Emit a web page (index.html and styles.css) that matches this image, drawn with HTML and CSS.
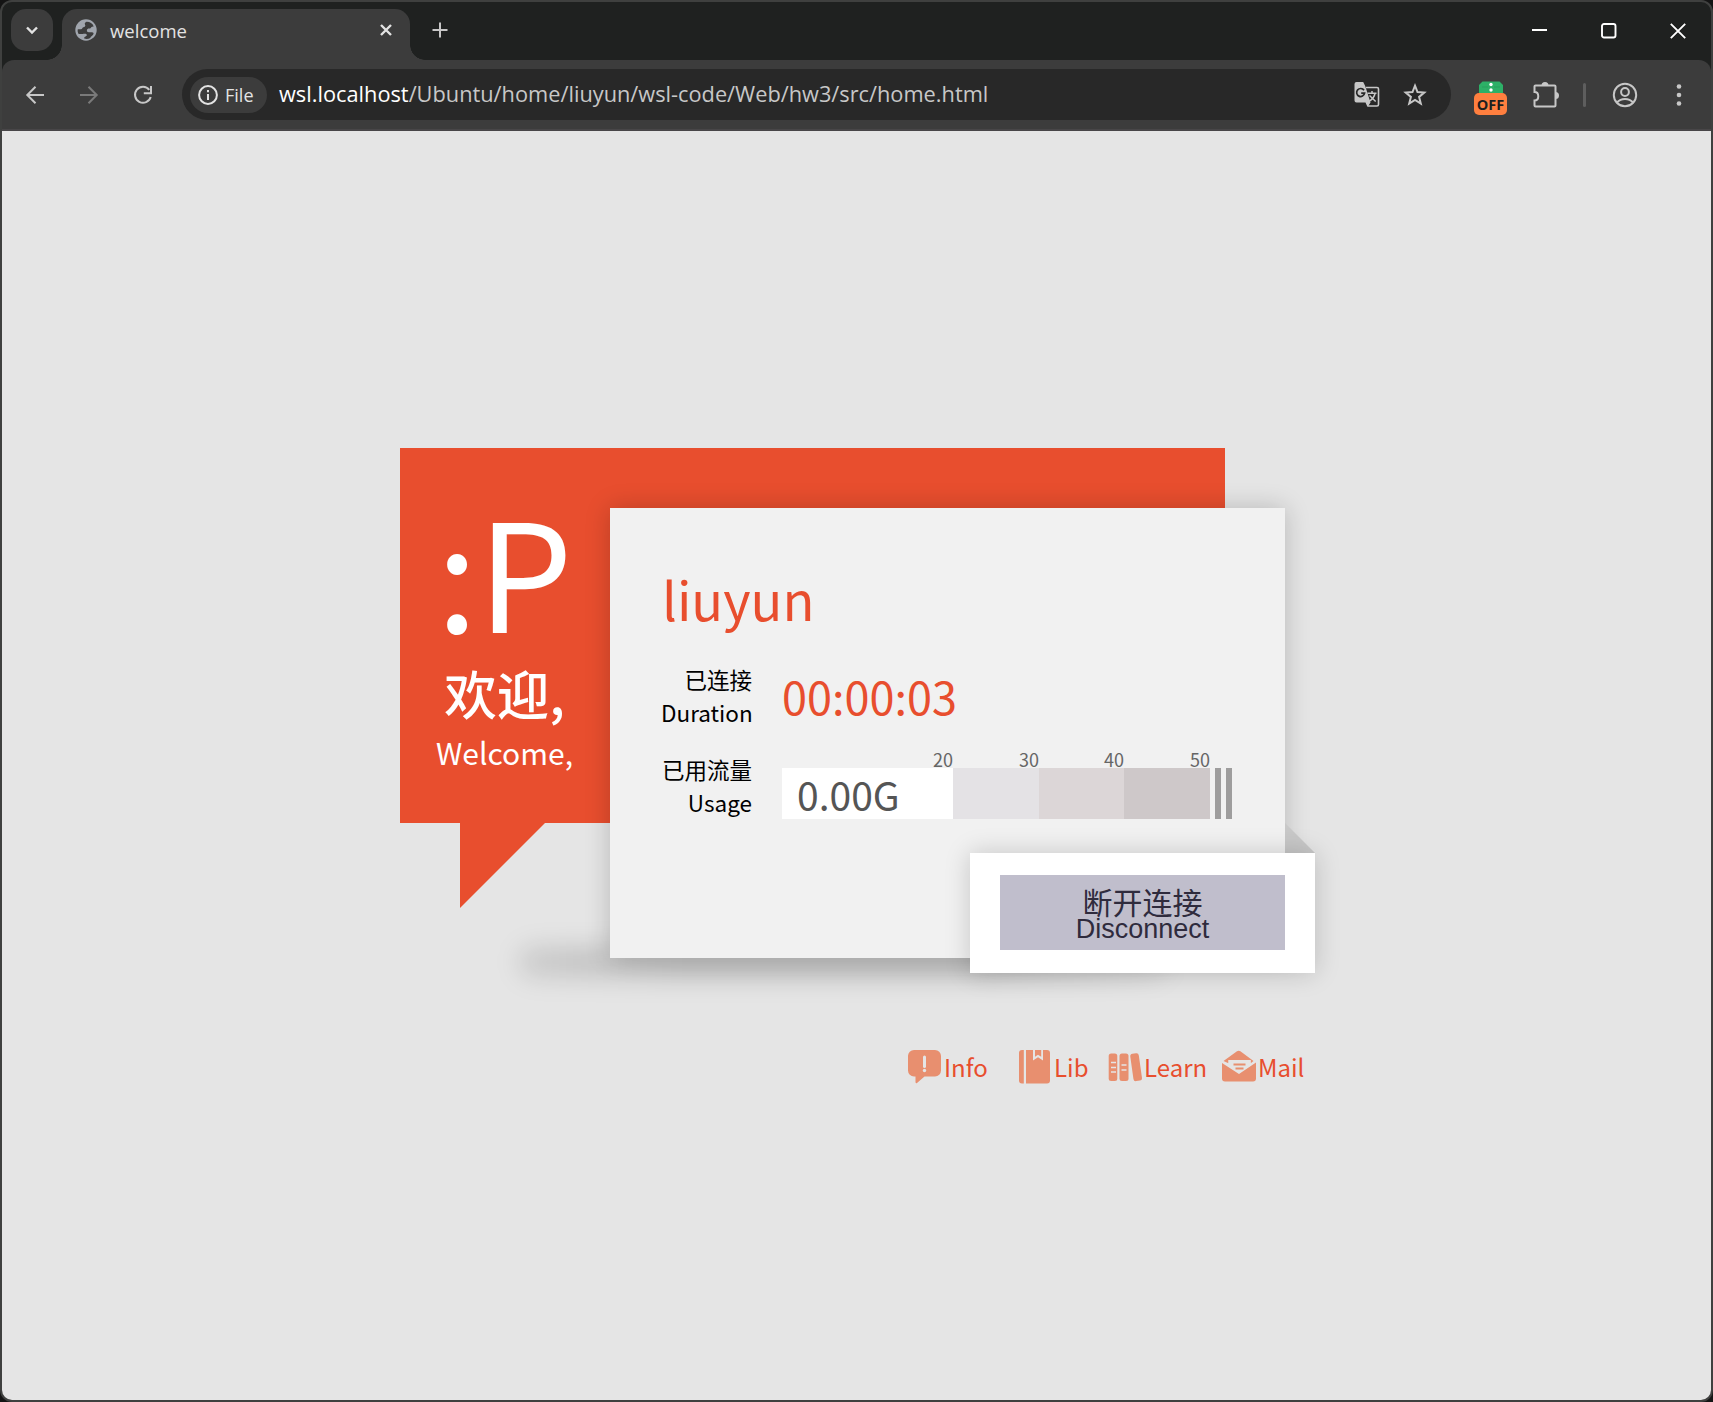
FILE: index.html
```html
<!DOCTYPE html>
<html lang="zh-CN">
<head>
<meta charset="utf-8">
<title>welcome</title>
<link rel="stylesheet" href="styles.css">
</head>
<body>
<div class="window">
  <header class="tabstrip">
    <div class="tab-search"><svg width="14" height="14" viewBox="0 0 14 14"><path d="M2 4.500l5 5 5-5" class="stroke bold"/></svg></div>
    <div class="tab">
      <svg class="globe" width="22" height="22" viewBox="0 0 22 22"><circle cx="11" cy="11" r="10.700" fill="#a0a5ad"/><path d="M11.500 2.800C9.500 3.600 9.500 4.800 10.200 6c.5 1.300-.6 2-1.900 2.300-1.300.4-.9 2-2.300 2H2.800c-.4 1.800 0 3.300.8 4.600h3.800c1.700 0 2.800-.6 3.900.2 1 .8.500 2.200-.7 2.500-1 .3-1.600 1-1.400 2 2.300.6 4.300.3 6-.6.6-1.700 2.700-2.200 3.300-3.900.3-1.100-.4-1.800-1.500-1.800h-3.200c-1.400 0-2-.9-1.900-2 .1-1.200 1-1.700 2.200-1.700 1.500.1 1.700-1.300 2.900-1.900l1.700-.3C17.500 4.300 14.800 2.700 11.500 2.800z" fill="#3c3c3c"/></svg>
      <span class="tab-title">welcome</span>
      <svg class="tab-close" width="14" height="14" viewBox="0 0 14 14"><path d="M2 2l10 10M12 2L2 12" class="stroke bold"/></svg>
    </div>
    <svg class="new-tab" width="16" height="16" viewBox="0 0 16 16"><path d="M8 .5v15M.5 8h15" class="stroke soft"/></svg>
    <div class="controls">
      <svg width="16" height="16" viewBox="0 0 16 16"><path d="M0 7h15" stroke="#fff" stroke-width="2"/></svg>
      <svg width="16" height="16" viewBox="0 0 16 16"><rect x="1" y="1" width="13.500" height="13.500" rx="2" fill="none" stroke="#fff" stroke-width="1.900"/></svg>
      <svg width="16" height="16" viewBox="0 0 16 16"><path d="M.8.8l14.400 14.400M15.200.8L.8 15.200" stroke="#fff" stroke-width="1.900"/></svg>
    </div>
  </header>

  <nav class="toolbar">
    <svg class="nav-icon" width="20" height="20" viewBox="0 0 20 20"><path d="M19 10H2.500M10.500 1.800L2.300 10l8.200 8.200" class="stroke"/></svg>
    <svg class="nav-icon dim" width="20" height="20" viewBox="0 0 20 20"><path d="M1 10h16.500M9.500 1.800l8.200 8.200-8.200 8.200" class="stroke"/></svg>
    <svg class="nav-icon" width="20" height="20" viewBox="0 0 20 20"><path d="M16.300 4.800A8 8 0 1 0 17.700 12" class="stroke"/><path d="M18 1v7.200h-7.200" class="stroke"/></svg>
    <div class="omnibox">
      <div class="chip">
        <svg width="20" height="20" viewBox="0 0 20 20"><circle cx="10" cy="10" r="8.900" class="stroke light"/><path d="M10 9v6M10 5v2.200" class="stroke light"/></svg>
        <span>File</span>
      </div>
      <div class="url"><b>wsl.localhost</b>/Ubuntu/home/liuyun/wsl-code/Web/hw3/src/home.html</div>
      <svg class="translate" width="26" height="26" viewBox="0 0 26 26"><path d="M12 5.500h11a1.500 1.500 0 0 1 1.500 1.500v15.500a1.500 1.500 0 0 1-1.500 1.500h-9" fill="none" stroke="#c7c7c7" stroke-width="1.600"/><path d="M2.500 0h6.700l2 4 5.300 16.500-3 4.500-2-4.500h-9A2 2 0 0 1 .5 18.500V2a2 2 0 0 1 2-2z" fill="#c7c7c7"/><path d="M13.500 11.200h9M18 9v2.200M21 11.500c-.7 3.500-3 6-5.700 7.700M15.500 13.500l6.200 6" fill="none" stroke="#c7c7c7" stroke-width="1.500"/><path d="M10 8.300A4 4 0 1 0 10.600 11.200H7.200" fill="none" stroke="#282828" stroke-width="1.700"/></svg>
      <svg class="star" width="24" height="24" viewBox="0 0 24 24"><path d="M12 2.700l2.500 6.300 6.800.5-5.200 4.400 1.700 6.700L12 17l-5.800 3.600 1.700-6.700L2.700 9.500 9.500 9z" class="stroke"/></svg>
    </div>
    <div class="extension">
      <svg width="26" height="12" viewBox="0 0 26 12"><path d="M4.500.5h17L25 4v8H1V4z" fill="#2db067"/><circle cx="13" cy="3.500" r="1.700" fill="#fff"/><circle cx="13" cy="9" r="1.700" fill="#fff"/><path d="M4 6h6M16 6h6" stroke="#27a15c"/></svg>
      <span>OFF</span>
    </div>
    <svg class="puzzle" width="26" height="26" viewBox="0 0 26 26"><path d="M2.500 3.500h19a1 1 0 0 1 1 1v19a1 1 0 0 1-1 1h-19a1 1 0 0 1-1-1v-5c5 0 5-8.500 0-8.500V4.500a1 1 0 0 1 1-1z" class="stroke"/><path d="M8.500 3.500a3.500 3.500 0 0 1 7 0zM22.500 10a3.500 3.500 0 0 1 0 7z" fill="#c7c7c7"/></svg>
    <i class="divider"></i>
    <svg class="profile" width="26" height="26" viewBox="0 0 26 26"><circle cx="13" cy="13" r="11.200" class="stroke"/><circle cx="13" cy="10" r="3.900" class="stroke"/><path d="M5 20.500c4-4.700 12-4.700 16 0" class="stroke"/></svg>
    <svg class="menu" width="6" height="22" viewBox="0 0 6 22"><g fill="#c7c7c7"><circle cx="3" cy="2.500" r="2.300"/><circle cx="3" cy="11" r="2.300"/><circle cx="3" cy="19.500" r="2.300"/></g></svg>
  </nav>

  <main class="page">
    <section class="stage">
      <div class="bubble">
        <div class="greeting">
          <div class="face">:P</div>
          <div class="hello">欢迎,</div>
          <div class="hello-en">Welcome,</div>
        </div>
      </div>
      <div class="floor-shadow"></div>
      <div class="card">
        <h1 class="user">liuyun</h1>
        <div class="row">
          <div class="label">已连接<br>Duration</div>
          <div class="time">00:00:03</div>
        </div>
        <div class="row">
          <div class="label">已用流量<br>Usage</div>
          <div class="meter">
            <div class="seg s20"><em>20</em><span>0.00G</span></div>
            <div class="seg s30"><em>30</em></div>
            <div class="seg s40"><em>40</em></div>
            <div class="seg s50"><em>50</em></div>
            <i class="tick"></i><i class="tick"></i>
          </div>
        </div>
      </div>
      <div class="fold"></div>
      <div class="action">
        <button class="disconnect"><span>断开连接</span>Disconnect</button>
      </div>
    </section>

    <footer class="links">
      <a><svg width="36" height="36" viewBox="0 0 36 36"><path d="M7 1h21a6 6 0 0 1 6 6v14.500a6 6 0 0 1-6 6H17.500L10 34c-1 .5-1.500 0-1.500-1v-5.500H7a6 6 0 0 1-6-6V7a6 6 0 0 1 6-6z"/><path d="M17.500 8v9.500" class="cut" stroke-width="3" stroke-linecap="round"/><circle cx="17.500" cy="21.500" r="1.700" fill="#e5e5e5"/></svg>Info</a>
      <a><svg width="36" height="36" viewBox="0 0 36 36"><path d="M5 1h1.800v33.500H5a3 3 0 0 1-3-3V4a3 3 0 0 1 3-3zM9 1h7v10.500l5-3.200 5 3.200V1h4a3 3 0 0 1 3 3v27.500a3 3 0 0 1-3 3H9z"/><path d="M18 1h6.200v6.800L21 5.800l-3 2z"/></svg>Lib</a>
      <a><svg class="shelf" width="36" height="36" viewBox="0 0 36 36"><rect x="1.700" y="4.500" width="8.600" height="27.500" rx="2.500"/><rect x="12.500" y="4.500" width="9" height="27.500" rx="2.500"/><rect x="24.800" y="4.500" width="8.600" height="27.500" rx="2.500" transform="rotate(-8 29 18)"/><path d="M4 13.500h5M4 18.500h5M4 23h5M14.500 16h5M14.500 21h5" class="cut" stroke-width="1.500"/></svg>Learn</a>
      <a><svg width="36" height="36" viewBox="0 0 36 36"><path d="M2.500 12L16 2.300c1.200-.9 2.200-.9 3.400 0l13.100 9.700-2.800 2.300V11H7.500v3.300z"/><path d="M1 14l17 11 17-11.500v16a3 3 0 0 1-3 3H4a3 3 0 0 1-3-3z"/><path d="M7.500 11h22v5.500L18 24 7.500 17z" fill="#e5e5e5"/><path d="M12.500 15.500h12M14.500 19.500h8" stroke="#e88f6f" stroke-width="2"/></svg>Mail</a>
    </footer>
  </main>
</div>
</body>
</html>
```
FILE: styles.css
```css
* { box-sizing: border-box; }
body {
  margin: 0;
  background: #141414;
  font-family: "Noto Sans CJK SC", "Noto Sans", sans-serif;
}
svg { display: block; flex: none; }
.window {
  width: 1713px;
  height: 1402px;
  border: 2px solid #3f403f;
  border-radius: 12px;
  overflow: hidden;
  background: #1f2120;
  display: flex;
  flex-direction: column;
}
.stroke { fill: none; stroke: #c7c7c7; stroke-width: 2; }
.stroke.bold { stroke: #e3e3e3; stroke-width: 2.400; }
.stroke.light { stroke: #e3e3e3; }
.dim { opacity: .45; }

/* tab strip */
.tabstrip {
  height: 58px;
  display: flex;
  align-items: flex-start;
  padding: 7px 25px 0 9px;
  font-family: "Open Sans", "Noto Sans", sans-serif;
}
.tab-search {
  width: 42px;
  height: 42px;
  border-radius: 15px;
  background: #3c3c3c;
  display: grid;
  place-items: center;
}
.tab {
  position: relative;
  width: 348px;
  height: 51px;
  margin-left: 9px;
  padding: 0 17px 9px 13px;
  border-radius: 15px 15px 0 0;
  background: #3c3c3c;
  display: flex;
  align-items: center;
}
.tab::before, .tab::after {
  content: "";
  position: absolute;
  bottom: 0;
  width: 15px;
  height: 15px;
}
.tab::before { left: -15px; background: radial-gradient(circle at 0 0, transparent 14.500px, #3c3c3c 15px); }
.tab::after { right: -15px; background: radial-gradient(circle at 100% 0, transparent 14.500px, #3c3c3c 15px); }
.tab-title {
  margin-left: 13px;
  flex: 1;
  padding-top: 2px;
  font-size: 18.500px;
  line-height: 24px;
  color: #e3e3e3;
}
.new-tab { margin: 13px 0 0 22px; }
.controls { margin: 14px 0 0 auto; display: flex; gap: 53px; }

/* toolbar */
.toolbar {
  height: 71px;
  border-bottom: 2px solid #484648;
  border-radius: 12px 12px 0 0;
  background: #3c3c3c;
  display: flex;
  align-items: center;
  padding: 0 29px 0 23px;
  font-family: "Open Sans", "Noto Sans", sans-serif;
}
.nav-icon { margin-right: 34px; }
.omnibox {
  width: 1269px;
  height: 51px;
  margin-left: -5px;
  padding: 0 24px 0 8px;
  border-radius: 26px;
  background: #282828;
  display: flex;
  align-items: center;
}
.chip {
  width: 77px;
  height: 36px;
  padding-left: 8px;
  border-radius: 18px;
  background: #3c3c3c;
  display: flex;
  align-items: center;
  gap: 7px;
  font-size: 18px;
  color: #e3e3e3;
}
.url { margin: 0 0 2px 12px; flex: 1; font-size: 21.780px; line-height: 30px; color: #c7c7c7; white-space: nowrap; }
.url b { font-weight: 400; color: #fff; }
.translate { margin-right: 23px; }
.extension { width: 33px; margin: 6px 0 0 23px; display: flex; flex-direction: column; align-items: center; }
.extension span {
  width: 33px;
  height: 22px;
  border-radius: 5px;
  background: #ff7f3f;
  color: #1f1f1f;
  font-size: 14.500px;
  font-weight: 700;
  line-height: 23px;
  text-align: center;
}
.puzzle { margin-left: 26px; }
.divider { width: 3px; height: 24px; margin-left: 24px; background: #5e5e5e; border-radius: 2px; }
.profile { margin-left: 26px; }
.menu { margin-left: auto; }

/* page */
.page { flex: 1; background: #e5e5e5; padding: 317px 0 0 398px; }
.stage { position: relative; width: 915px; height: 525px; }
.bubble { position: relative; width: 825px; height: 375px; padding-top: 45px; background: #e84e2e; }
.bubble::after {
  content: "";
  position: absolute;
  left: 60px;
  top: 100%;
  border-top: 85px solid #e84e2e;
  border-right: 85px solid transparent;
}
.greeting { width: 209px; text-align: center; color: #fff; }
.face { font-size: 150px; line-height: 150px; }
.hello { margin-top: 11px; font-size: 52.500px; line-height: 76px; font-weight: 500; }
.hello-en { font-size: 30px; line-height: 44px; }
.floor-shadow {
  position: absolute;
  left: 118px;
  top: 498px;
  width: 650px;
  height: 32px;
  border-radius: 16px;
  background: linear-gradient(90deg, rgba(0, 0, 0, .1), rgba(0, 0, 0, .19) 25%, rgba(0, 0, 0, .19) 70%, rgba(0, 0, 0, .07));
  filter: blur(12px);
}
.card {
  position: absolute;
  left: 210px;
  top: 60px;
  width: 675px;
  height: 450px;
  padding: 52px 50px 0 51px;
  background: #f1f1f1;
  box-shadow: 0 0 24px rgba(0, 0, 0, .2);
}
.user { margin: 0 0 27px 1px; font-size: 52.500px; line-height: 76px; font-weight: 400; color: #e84e2e; }
.row { height: 90px; display: flex; }
.label { width: 91px; text-align: right; font-size: 22.500px; line-height: 32.500px; color: #000; white-space: nowrap; }
.time { margin-left: 30px; font-size: 45px; line-height: 65px; color: #e84e2e; }
.meter { margin: 15px 0 0 30px; height: 51px; display: flex; }
.seg { position: relative; height: 51px; width: 86px; }
.seg em { position: absolute; right: 0; top: -18px; font-size: 18px; line-height: 18px; font-style: normal; color: #666; }
.seg span { display: block; padding-left: 15px; font-size: 39px; line-height: 52px; color: #555; }
.s20 { width: 171px; background: #fff; }
.s30 { background: #e4e2e5; }
.s40 { width: 85px; background: #dcd6d7; }
.s50 { background: #cec8c9; }
.tick { width: 6px; margin-left: 5px; background: #9e9d9d; }
.fold {
  position: absolute;
  left: 885px;
  top: 375px;
  border-bottom: 30px solid #c8c8c8;
  border-right: 30px solid transparent;
}
.action {
  position: absolute;
  left: 570px;
  top: 405px;
  width: 345px;
  height: 120px;
  padding: 22px 30px;
  background: #fff;
  box-shadow: 0 0 24px rgba(0, 0, 0, .18);
}
.disconnect {
  display: block;
  width: 285px;
  height: 75px;
  padding: 5px 0 0;
  border: 0;
  background: #c0becc;
  color: #2f2b3d;
  font: 27px/24px "Liberation Sans", "Noto Sans CJK SC", sans-serif;
}
.disconnect span { display: block; font-size: 30px; line-height: 27px; }

.links {
  margin: 76px 0 0 507px;
  display: grid;
  grid-template-columns: 110px 91px 113px auto;
  justify-content: start;
  font-size: 24px;
  line-height: 36px;
  color: #e84e2e;
}
.links a { display: flex; align-items: center; }
.links svg { fill: #e88f6f; margin-right: 1px; }
.links .shelf { margin-left: -1px; }
.cut { fill: none; stroke: #e5e5e5; }
```
